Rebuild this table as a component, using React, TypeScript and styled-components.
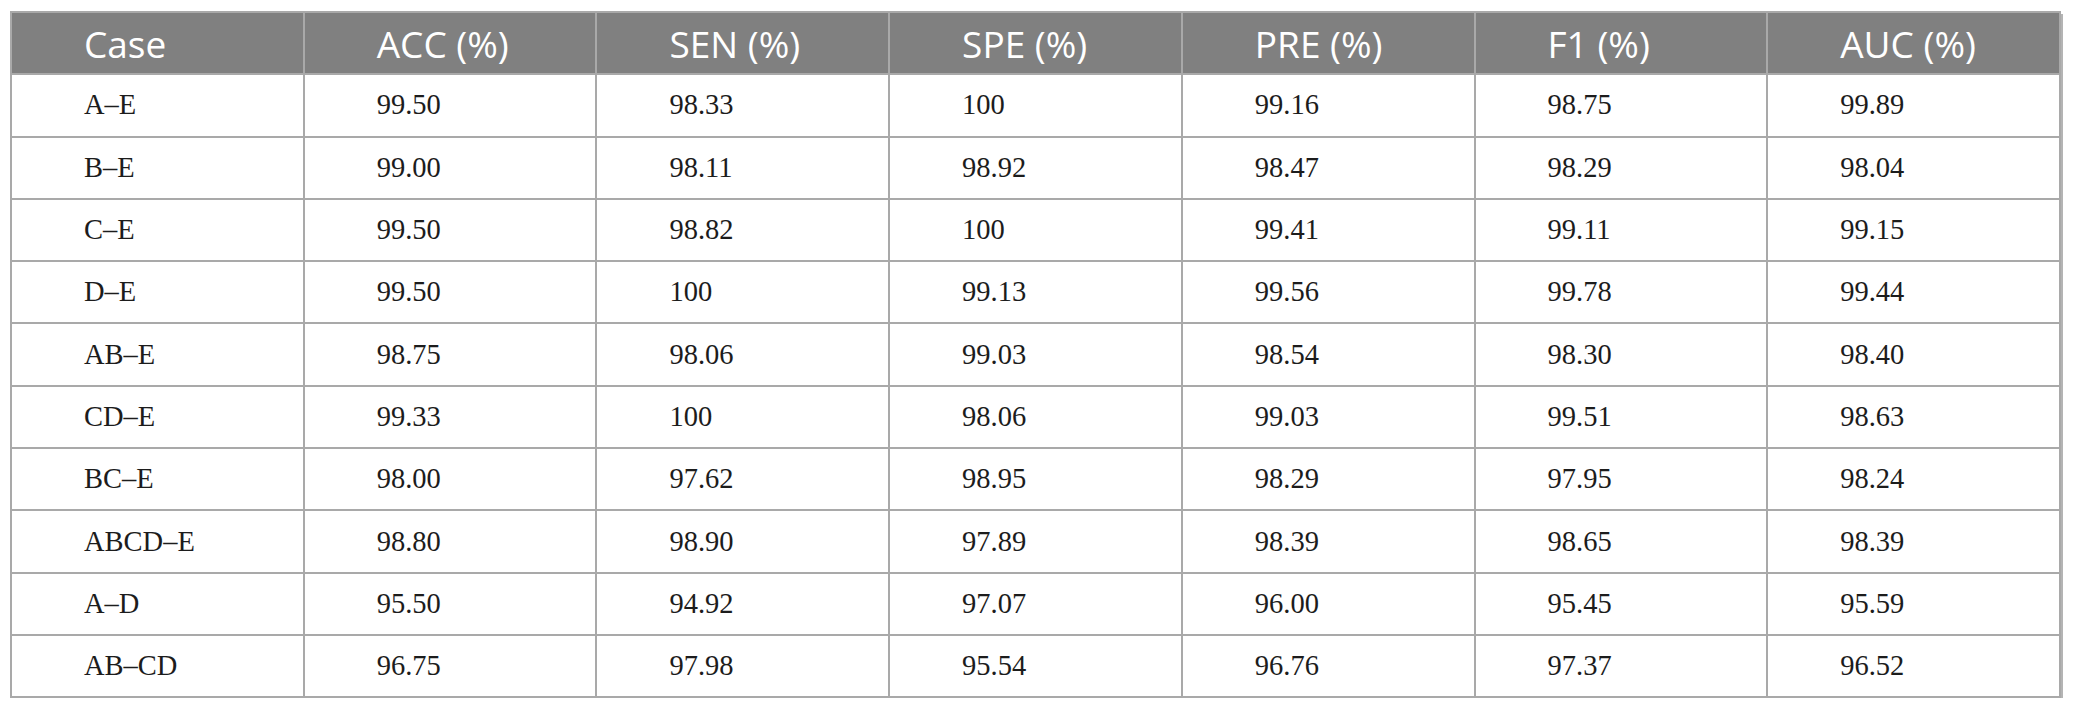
import styled, { createGlobalStyle } from 'styled-components'

const GlobalStyle = createGlobalStyle`
  body {
    margin: 0;
    background: #fff;
  }
`

const Wrapper = styled.div`
  padding: 11px 0 0 10px;
`

const Table = styled.table`
  width: 2051px;
  table-layout: fixed;
  border-collapse: collapse;
  border: 2px solid #a9a9a9;
  box-shadow: 2px 3px 0 #b4b4b4;
`

const HeadCell = styled.th`
  height: 62.3px;
  padding: 0 0 0 72px;
  box-sizing: border-box;
  background: #808080;
  color: #fff;
  text-align: left;
  font-family: 'Open Sans', 'Noto Sans', sans-serif;
  font-weight: 400;
  font-size: 37px;
  border: 2px solid #a9a9a9;
`

const Cell = styled.td`
  height: 62.3px;
  padding: 0 0 0 72px;
  box-sizing: border-box;
  color: #1c1c1c;
  font-family: 'Liberation Serif', 'Times New Roman', serif;
  font-size: 28.5px;
  border: 2px solid #a9a9a9;
`

const headers = ['Case', 'ACC (%)', 'SEN (%)', 'SPE (%)', 'PRE (%)', 'F1 (%)', 'AUC (%)']

const rows = [
  ['A–E', '99.50', '98.33', '100', '99.16', '98.75', '99.89'],
  ['B–E', '99.00', '98.11', '98.92', '98.47', '98.29', '98.04'],
  ['C–E', '99.50', '98.82', '100', '99.41', '99.11', '99.15'],
  ['D–E', '99.50', '100', '99.13', '99.56', '99.78', '99.44'],
  ['AB–E', '98.75', '98.06', '99.03', '98.54', '98.30', '98.40'],
  ['CD–E', '99.33', '100', '98.06', '99.03', '99.51', '98.63'],
  ['BC–E', '98.00', '97.62', '98.95', '98.29', '97.95', '98.24'],
  ['ABCD–E', '98.80', '98.90', '97.89', '98.39', '98.65', '98.39'],
  ['A–D', '95.50', '94.92', '97.07', '96.00', '95.45', '95.59'],
  ['AB–CD', '96.75', '97.98', '95.54', '96.76', '97.37', '96.52'],
]

export default function App() {
  return (
    <>
      <GlobalStyle />
      <Wrapper>
        <Table>
          <thead>
            <tr>
              {headers.map((h) => (
                <HeadCell key={h}>{h}</HeadCell>
              ))}
            </tr>
          </thead>
          <tbody>
            {rows.map((r) => (
              <tr key={r[0]}>
                {r.map((v, i) => (
                  <Cell key={i}>{v}</Cell>
                ))}
              </tr>
            ))}
          </tbody>
        </Table>
      </Wrapper>
    </>
  )
}
